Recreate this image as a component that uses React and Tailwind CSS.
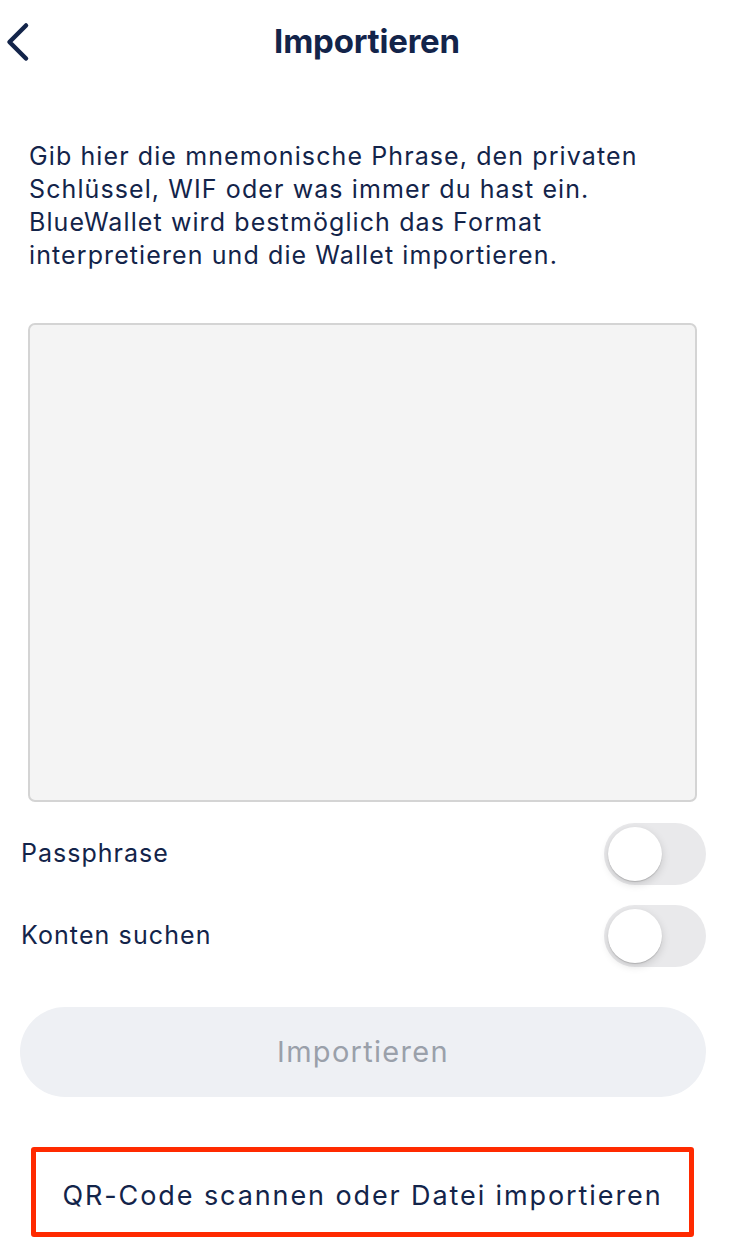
import React from "react";

function Toggle() {
  return (
    <div className="w-[102px] h-[62px] rounded-full bg-[#e9e9eb] p-[4px] flex items-center">
      <div className="w-[54px] h-[54px] rounded-full bg-white shadow-[0_3px_8px_rgba(0,0,0,0.15),0_1px_1px_rgba(0,0,0,0.16)]" />
    </div>
  );
}

export default function App() {
  return (
    <div className="w-[734px] h-[1237px] bg-white text-[#13244a] overflow-hidden flex flex-col" style={{ fontFamily: "Inter, 'Noto Sans', sans-serif" }}>
      <div className="relative h-[86px] flex items-center justify-center">
        <button className="absolute left-0 top-0 w-[40px] h-[80px]">
          <svg width="40" height="80" viewBox="0 0 40 80" fill="none">
            <path d="M26 25.5 L9.5 42 L26 58.5" stroke="#13244a" strokeWidth="4.5" strokeLinecap="round" strokeLinejoin="round" />
          </svg>
        </button>
        <h1 className="text-[33px] font-bold tracking-[-0.2px] mt-[-2px]">Importieren</h1>
      </div>
      <p className="pl-[29px] mt-[54px] text-[25px] leading-[33px] tracking-[1.1px] whitespace-nowrap">
        Gib hier die mnemonische Phrase, den privaten<br />
        Schlüssel, WIF oder was immer du hast ein.<br />
        BlueWallet wird bestmöglich das Format<br />
        interpretieren und die Wallet importieren.
      </p>
      <div className="ml-[28px] mr-[37px] mt-[51px] h-[479px] rounded-[7px] border-2 border-[#d4d4d4] bg-[#f4f4f4]" />
      <div className="mt-[21px] flex items-center justify-between pl-[21px] pr-[28px] h-[62px]">
        <span className="text-[25px] tracking-[1px]">Passphrase</span>
        <Toggle />
      </div>
      <div className="mt-[20px] flex items-center justify-between pl-[21px] pr-[28px] h-[62px]">
        <span className="text-[25px] tracking-[1.1px]">Konten suchen</span>
        <Toggle />
      </div>
      <div className="mt-[40px] mx-[20px] mr-[28px] h-[90px] rounded-full bg-[#eef0f4] flex items-center justify-center">
        <span className="text-[29px] text-[#9aa0aa] tracking-[1.3px]">Importieren</span>
      </div>
      <div className="mt-[50px] ml-[31px] w-[663px] h-[90px] border-[5px] border-[#ff2a00] rounded-[3px] flex items-center justify-center pt-[8px]">
        <span className="text-[27px] tracking-[1.9px] whitespace-nowrap">QR-Code scannen oder Datei importieren</span>
      </div>
    </div>
  );
}
